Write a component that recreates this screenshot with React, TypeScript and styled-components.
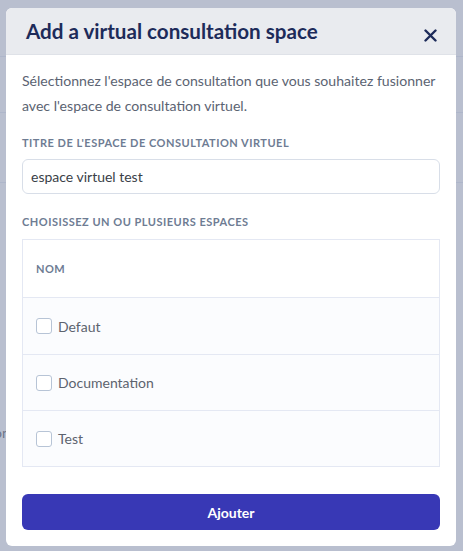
import styled, { createGlobalStyle } from "styled-components";

const GlobalStyle = createGlobalStyle`
  html, body {
    margin: 0;
    padding: 0;
    height: 100%;
  }
  body {
    font-family: "Source Sans Pro", "Lato", "Liberation Sans", sans-serif;
    background-color: #b9bfcf;
  }
  * {
    box-sizing: border-box;
  }
`;

const Backdrop = styled.div`
  position: relative;
  width: 463px;
  height: 551px;
  overflow: hidden;
  background-color: #b9bfcf;
`;

const PageBehind = styled.div`
  display: flex;
  flex-direction: column;
`;

const BehindRow = styled.div<{ h: number }>`
  height: ${(p) => p.h}px;
  border-bottom: 1px solid #aeb6ca;
`;

const BehindText = styled.div`
  position: absolute;
  left: -6px;
  top: 424px;
  font-size: 14px;
  color: #6d7488;
`;

const Modal = styled.div`
  position: absolute;
  left: 6px;
  top: 8px;
  width: 450px;
  height: 538px;
  background: #ffffff;
  border-radius: 6px;
  overflow: hidden;
  display: flex;
  flex-direction: column;
`;

const Header = styled.div`
  height: 47px;
  flex-shrink: 0;
  background: #e9ebef;
  border-bottom: 1px solid #dfe2e8;
  display: flex;
  align-items: center;
  justify-content: space-between;
  padding: 0 16px 0 20px;
`;

const Title = styled.h2`
  margin: 0;
  font-size: 20.6px;
  font-weight: 700;
  color: #1d2b5a;
`;

const CloseButton = styled.button`
  border: none;
  background: none;
  padding: 0;
  width: 20px;
  height: 20px;
  display: flex;
  align-items: center;
  justify-content: center;
  margin-top: 8px;
  cursor: pointer;
`;

const Body = styled.div`
  padding: 13px 16px 16px;
  display: flex;
  flex-direction: column;
`;

const Intro = styled.p`
  margin: 0;
  font-size: 14.1px;
  line-height: 25px;
  color: #5b6372;
`;

const Label = styled.div<{ mt: number }>`
  margin-top: ${(p) => p.mt}px;
  font-size: 11px;
  line-height: 16px;
  font-weight: 700;
  letter-spacing: 0.5px;
  text-transform: uppercase;
  color: #6e7c93;
`;

const Input = styled.input`
  margin-top: 8px;
  height: 35px;
  width: 100%;
  border: 1px solid #d8dee8;
  border-radius: 6px;
  padding: 0 8px;
  font-family: inherit;
  font-size: 14px;
  color: #3a3f48;
  outline: none;
`;

const Table = styled.div`
  margin-top: 9px;
  border: 1px solid #e4e8f3;
  display: flex;
  flex-direction: column;
`;

const HeadRow = styled.div`
  height: 57px;
  display: flex;
  align-items: center;
  padding: 0 13px;
  font-size: 11px;
  font-weight: 700;
  letter-spacing: 0.5px;
  color: #6e7c93;
  background: #ffffff;
`;

const Row = styled.label<{ h: number }>`
  height: ${(p) => p.h}px;
  display: flex;
  align-items: center;
  gap: 6px;
  padding: 0 13px;
  border-top: 1px solid #e4e8f3;
  background: #fbfcfe;
  font-size: 14px;
  color: #5d636e;
  cursor: pointer;
`;

const Box = styled.span`
  width: 16px;
  height: 16px;
  border: 1.5px solid #b7c4d6;
  border-radius: 3px;
  background: #ffffff;
`;

const Submit = styled.button`
  margin-top: 27px;
  height: 36px;
  width: 100%;
  border: none;
  border-radius: 6px;
  background: #3838b5;
  color: #ffffff;
  font-family: inherit;
  font-size: 14px;
  font-weight: 700;
  cursor: pointer;
`;

const spaces = [
  { name: "Defaut", h: 57 },
  { name: "Documentation", h: 56 },
  { name: "Test", h: 56 },
];

export default function App() {
  return (
    <>
      <GlobalStyle />
      <Backdrop>
        <PageBehind>
          <BehindRow h={57} />
          <BehindRow h={56} />
          <BehindRow h={70} />
        </PageBehind>
        <BehindText>on</BehindText>
        <Modal>
          <Header>
            <Title>Add a virtual consultation space</Title>
            <CloseButton aria-label="Fermer">
              <svg width="13" height="13" viewBox="0 0 13 13">
                <path
                  d="M1.5 1.5 L11.5 11.5 M11.5 1.5 L1.5 11.5"
                  stroke="#1d2b5a"
                  strokeWidth="2.4"
                  strokeLinecap="round"
                />
              </svg>
            </CloseButton>
          </Header>
          <Body>
            <Intro>
              Sélectionnez l'espace de consultation que vous souhaitez fusionner
              avec l'espace de consultation virtuel.
            </Intro>
            <Label mt={17}>Titre de l'espace de consultation virtuel</Label>
            <Input defaultValue="espace virtuel test" />
            <Label mt={20}>Choisissez un ou plusieurs espaces</Label>
            <Table>
              <HeadRow>NOM</HeadRow>
              {spaces.map((s) => (
                <Row key={s.name} h={s.h}>
                  <Box />
                  {s.name}
                </Row>
              ))}
            </Table>
            <Submit>Ajouter</Submit>
          </Body>
        </Modal>
      </Backdrop>
    </>
  );
}
